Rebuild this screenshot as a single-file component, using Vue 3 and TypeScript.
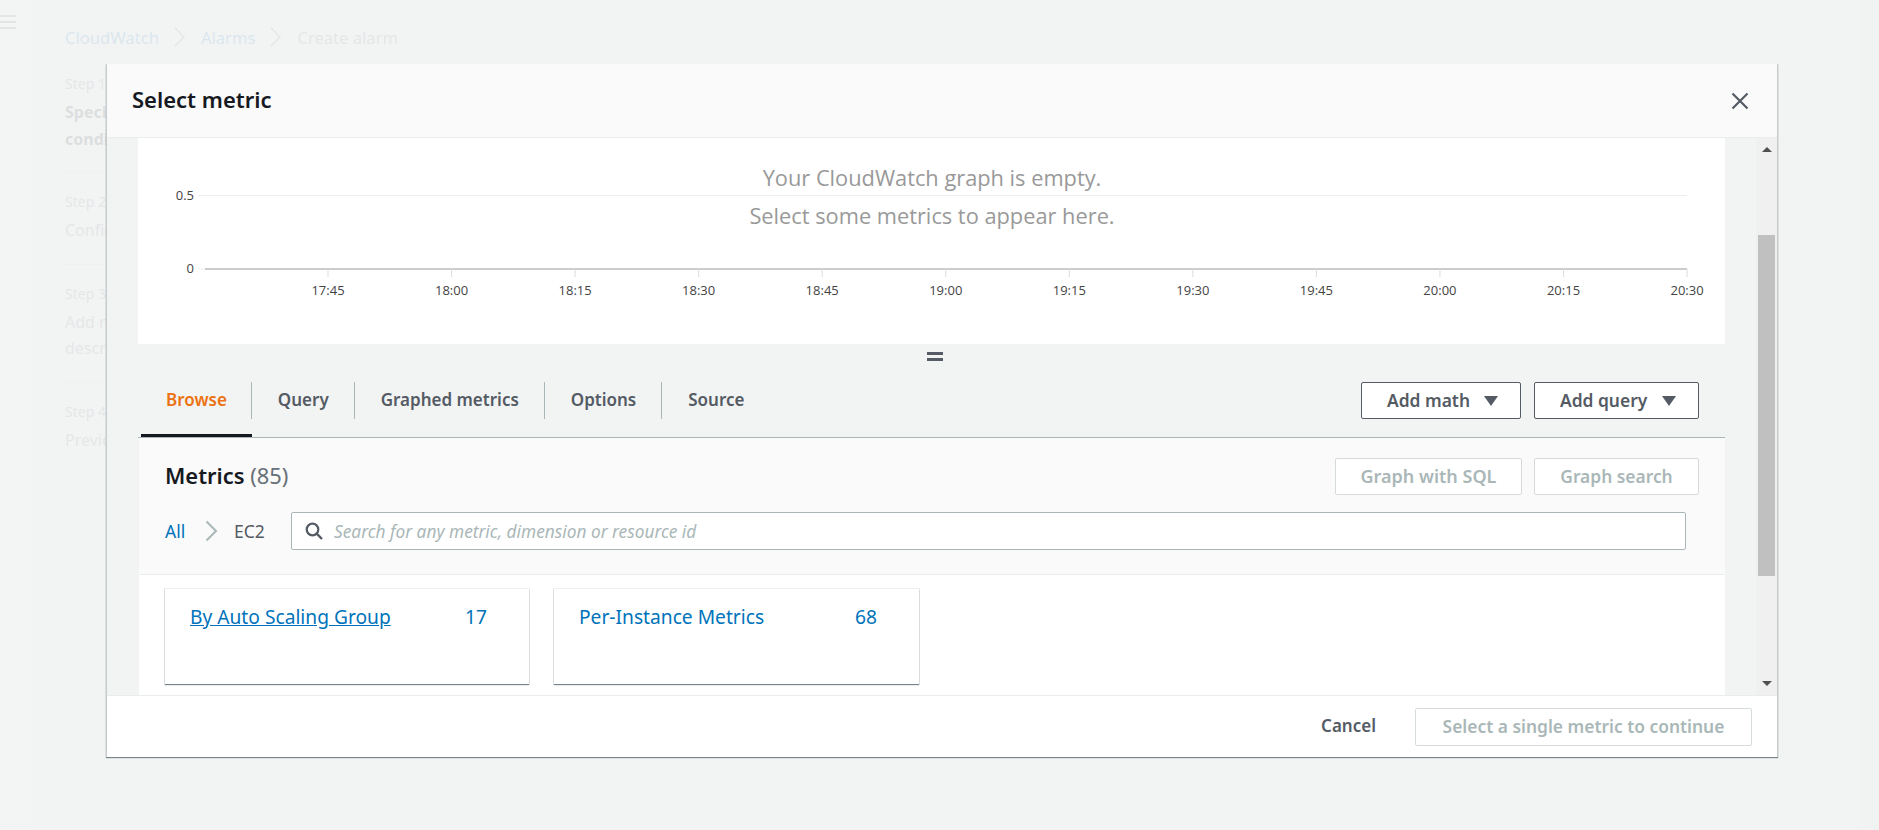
<script setup lang="ts">
interface Step {
  label: string
  title: string
  active?: boolean
}

const steps: Step[] = [
  { label: 'Step 1', title: 'Specify metric and conditions', active: true },
  { label: 'Step 2', title: 'Configure actions' },
  { label: 'Step 3', title: 'Add metric name and description' },
  { label: 'Step 4', title: 'Preview and create' },
]

const tabs = ['Browse', 'Query', 'Graphed metrics', 'Options', 'Source']

const times = ['17:45', '18:00', '18:15', '18:30', '18:45', '19:00', '19:15', '19:30', '19:45', '20:00', '20:15', '20:30']
const ticks = times.map((label, i) => ({ label, x: 190 + i * 123.55 }))

const groups = [
  { name: 'By Auto Scaling Group', count: 17, underlined: true },
  { name: 'Per-Instance Metrics', count: 68, underlined: false },
]
</script>

<template>
  <div class="page">
    <div class="rail">
      <svg width="16" height="14" viewBox="0 0 16 14" class="burger">
        <path d="M0 1h16M0 7h16M0 13h16" stroke="#545b64" stroke-width="2" />
      </svg>
    </div>
    <div class="main">
      <div class="crumbs">
        <span class="crumb-link">CloudWatch</span>
        <svg width="12" height="20" viewBox="0 0 12 20" fill="none"><path d="M1 1l9 9-9 9" stroke="#687078" stroke-width="1.5" /></svg>
        <span class="crumb-link">Alarms</span>
        <svg width="12" height="20" viewBox="0 0 12 20" fill="none"><path d="M1 1l9 9-9 9" stroke="#687078" stroke-width="1.5" /></svg>
        <span class="crumb-now">Create alarm</span>
      </div>
      <ul class="steps">
        <li v-for="step in steps" :key="step.label" class="step">
          <div class="step-label">{{ step.label }}</div>
          <div class="step-title" :class="{ active: step.active }">{{ step.title }}</div>
        </li>
      </ul>
    </div>
    <div class="strip"></div>

    <div class="backdrop"></div>

    <div class="modal">
      <header class="modal-head">
        <h2>Select metric</h2>
        <svg width="18" height="18" viewBox="0 0 18 18" fill="none">
          <path d="M1.5 1.5l15 15M16.5 1.5l-15 15" stroke="#545b64" stroke-width="2.2" />
        </svg>
      </header>

      <div class="modal-body">
        <div class="content">
          <svg class="chart" width="1587" height="206" viewBox="0 0 1587 206">
            <line x1="60" y1="57.5" x2="1549" y2="57.5" stroke="#eeeeee" />
            <line x1="60" y1="131" x2="67" y2="131" stroke="#eeeeee" />
            <line x1="67" y1="131" x2="1549" y2="131" stroke="#cccccc" stroke-width="2" />
            <text x="56" y="62" text-anchor="end" class="axis">0.5</text>
            <text x="56" y="135" text-anchor="end" class="axis">0</text>
            <g v-for="t in ticks" :key="t.label">
              <line :x1="t.x" y1="131" :x2="t.x" y2="139" stroke="#dddddd" />
              <text :x="t.x" y="157" text-anchor="middle" class="axis">{{ t.label }}</text>
            </g>
            <text x="794" y="48" text-anchor="middle" class="empty">Your CloudWatch graph is empty.</text>
            <text x="794" y="86" text-anchor="middle" class="empty">Select some metrics to appear here.</text>
          </svg>

          <div class="splitter"><span></span></div>

          <div class="tabbar">
            <div class="tabs">
              <div v-for="(tab, i) in tabs" :key="tab" class="tab" :class="{ on: i === 0 }">
                <span class="tab-text" :class="{ last: i === tabs.length - 1 }">{{ tab }}</span>
              </div>
            </div>
            <div class="tab-actions">
              <button class="btn drop add-math">Add math <i class="caret"></i></button>
              <button class="btn drop add-query">Add query <i class="caret"></i></button>
            </div>
          </div>

          <section class="panel">
            <div class="panel-top">
              <h3>Metrics <span>(85)</span></h3>
              <div class="panel-actions">
                <button class="btn off sql">Graph with SQL</button>
                <button class="btn off graph">Graph search</button>
              </div>
            </div>
            <div class="panel-search">
              <a class="all">All</a>
              <svg width="13" height="22" viewBox="0 0 13 22" fill="none"><path d="M1.5 1.5l9.5 9.5-9.5 9.5" stroke="#aab7b8" stroke-width="2" /></svg>
              <span class="ns">EC2</span>
              <div class="search">
                <svg width="18" height="18" viewBox="0 0 18 18" fill="none">
                  <circle cx="7.5" cy="7.5" r="5.8" stroke="#545b64" stroke-width="2.2" />
                  <path d="M11.7 11.7L17 17" stroke="#545b64" stroke-width="2.4" />
                </svg>
                <span>Search for any metric, dimension or resource id</span>
              </div>
            </div>
          </section>

          <div class="groups">
            <div v-for="g in groups" :key="g.name" class="card">
              <a :class="{ under: g.underlined }">{{ g.name }}</a>
              <span>{{ g.count }}</span>
            </div>
          </div>
        </div>

        <div class="scrollbar">
          <i class="arrow up"></i>
          <div class="thumb"></div>
          <i class="arrow down"></i>
        </div>
      </div>

      <footer class="modal-foot">
        <button class="cancel">Cancel</button>
        <button class="btn off submit">Select a single metric to continue</button>
      </footer>
    </div>
  </div>
</template>

<style>
html,
body {
  margin: 0;
  overflow: hidden;
}
</style>

<style scoped>
.page {
  position: relative;
  display: flex;
  height: 830px;
  overflow: hidden;
  background: #f2f3f3;
  font-family: "Noto Sans", "Open Sans", sans-serif;
  font-size: 16px;
  color: #16191f;
}

.rail {
  width: 32px;
  flex-shrink: 0;
  background: #f8f8f8;
  padding-top: 15px;
  box-sizing: border-box;
}

.burger {
  display: block;
}

.main {
  flex: 1;
  padding: 25px 0 0 33px;
}

.strip {
  width: 17px;
  flex-shrink: 0;
  background: #e4e6e6;
}

.crumbs {
  display: flex;
  align-items: center;
  gap: 15px;
  height: 24px;
  font-size: 16.6px;
}

.crumb-link {
  color: #0073bb;
}

.crumb-now {
  color: #687078;
}

.steps {
  list-style: none;
  margin: 24px 0 0;
  padding: 0;
  width: 185px;
}

.step {
  padding: 0 0 20px;
  margin-bottom: 18px;
  border-bottom: 1px solid #d5dbdb;
}

.step:last-child {
  border-bottom: none;
}

.step-label {
  font-size: 14px;
  line-height: 22px;
  color: #687078;
}

.step-title {
  margin-top: 4px;
  line-height: 26.5px;
  color: #687078;
}

.step-title.active {
  font-weight: 700;
  color: #16191f;
}

.backdrop {
  position: absolute;
  inset: 0;
  background: rgba(242, 243, 243, 0.9);
}

.modal {
  position: absolute;
  left: 106px;
  top: 64px;
  width: 1672px;
  height: 693px;
  box-sizing: border-box;
  display: flex;
  flex-direction: column;
  background: #ffffff;
  border-left: 1px solid #c6cbcb;
  border-right: 1px solid #c6cbcb;
  box-shadow: 0 1px 1px 0 rgba(0, 28, 36, 0.5);
}

.modal-head {
  height: 74px;
  flex-shrink: 0;
  display: flex;
  align-items: center;
  justify-content: space-between;
  padding: 0 28px 0 25px;
  box-sizing: border-box;
  background: #fafafa;
  border-bottom: 1px solid #eaeded;
}

.modal-head h2 {
  margin: 0 0 3px;
  font-size: 22px;
  font-weight: 600;
}

.modal-body {
  flex: 1;
  min-height: 0;
  display: flex;
  background: #f2f3f3;
}

.content {
  width: 1587px;
  margin-left: 31px;
  margin-right: 31px;
}

.chart {
  display: block;
  background: #ffffff;
  font-family: "Open Sans", sans-serif;
}

.axis {
  font-size: 13px;
  fill: #444444;
}

.empty {
  font-size: 21.8px;
  fill: #999999;
}

.splitter {
  height: 38px;
  display: flex;
  justify-content: center;
  padding-top: 8px;
  box-sizing: border-box;
}

.splitter span {
  width: 16px;
  height: 3px;
  margin-left: 7px;
  border-top: 3px solid #545b64;
  border-bottom: 3px solid #545b64;
}

.tabbar {
  height: 56px;
  box-sizing: border-box;
  display: flex;
  justify-content: space-between;
  padding: 0 26px 0 3px;
  border-bottom: 1px solid #aab7b8;
}

.tabs {
  display: flex;
  height: 55px;
}

.tab {
  height: 55px;
  box-sizing: border-box;
  color: #545b64;
  font-size: 17px;
  font-weight: 600;
}

.tab.on {
  color: #ec7211;
  border-bottom: 3px solid #16191f;
}

.tab-text {
  display: block;
  height: 37px;
  line-height: 36px;
  padding: 0 25px 0 26px;
  border-right: 1px solid #aab7b8;
}

.tab.on .tab-text {
  padding: 0 24px 0 25px;
}

.tab-text.last {
  border-right: none;
}

.tab-actions {
  display: flex;
  gap: 13px;
  height: 37px;
}

.btn {
  height: 37px;
  box-sizing: border-box;
  font-family: inherit;
  font-size: 17.4px;
  font-weight: 600;
  border-radius: 2px;
  background: #ffffff;
  padding: 0 0 2px;
}

.btn.drop {
  display: flex;
  align-items: center;
  justify-content: space-between;
  padding: 0 22px 2px 25px;
  color: #545b64;
  border: 1px solid #545b64;
}

.add-math {
  width: 160px;
}

.add-query {
  width: 165px;
}

.caret {
  width: 0;
  height: 0;
  border-left: 7px solid transparent;
  border-right: 7px solid transparent;
  border-top: 10px solid #545b64;
  margin-top: 2px;
}

.btn.off {
  color: #aab7b8;
  border: 1px solid #d5dbdb;
}

.panel {
  height: 137px;
  margin-left: 1px;
  box-sizing: border-box;
  padding: 20px 26px 0 26px;
  background: #fafafa;
  border-bottom: 1px solid #eaeded;
}

.panel-top {
  display: flex;
  align-items: center;
  justify-content: space-between;
  height: 37px;
}

.panel-top h3 {
  margin: 0 0 2px;
  font-size: 21.9px;
  font-weight: 600;
}

.panel-top h3 span {
  font-weight: 400;
  color: #687078;
}

.panel-actions {
  display: flex;
  gap: 12px;
}

.btn.sql {
  width: 187px;
  font-size: 18px;
}

.graph {
  width: 165px;
}

.panel-search {
  display: flex;
  align-items: center;
  margin-top: 17px;
  height: 38px;
  font-size: 17.5px;
}

.all {
  color: #0073bb;
  width: 40px;
}

.ns {
  margin-left: 16px;
  width: 57px;
  color: #545b64;
}

.search {
  width: 1395px;
  height: 38px;
  box-sizing: border-box;
  display: flex;
  align-items: center;
  gap: 11px;
  padding-left: 13px;
  background: #ffffff;
  border: 1px solid #aab7b8;
  border-radius: 2px;
  font-size: 17.3px;
  font-style: italic;
  color: #aab7b8;
}

.groups {
  display: flex;
  gap: 25px;
  height: 120px;
  margin-left: 1px;
  box-sizing: border-box;
  padding: 14px 0 0 26px;
  background: #ffffff;
}

.card {
  width: 364px;
  height: 95px;
  box-sizing: border-box;
  display: flex;
  justify-content: space-between;
  padding: 16px 42px 0 25px;
  line-height: 24px;
  font-size: 19.2px;
  color: #0073bb;
  background: #ffffff;
  box-shadow: 0 1px 1px 0 rgba(0, 28, 36, 0.5), 0 0 0 1px rgba(0, 28, 36, 0.07);
}

.card + .card {
  width: 365px;
}

.under {
  text-decoration: underline;
}

.scrollbar {
  width: 21px;
  flex-shrink: 0;
  position: relative;
  background: #f0f0f0;
  display: flex;
  flex-direction: column;
  align-items: center;
}

.thumb {
  position: absolute;
  left: 2px;
  right: 2px;
  top: 97px;
  height: 341px;
  background: #c0c0c0;
}

.arrow {
  position: absolute;
  width: 0;
  height: 0;
  border-left: 5px solid transparent;
  border-right: 5px solid transparent;
}

.arrow.up {
  top: 9px;
  border-bottom: 5px solid #505050;
}

.arrow.down {
  bottom: 9px;
  border-top: 5px solid #505050;
}

.modal-foot {
  height: 62px;
  flex-shrink: 0;
  box-sizing: border-box;
  display: flex;
  align-items: center;
  justify-content: flex-end;
  gap: 39px;
  padding: 0 25px 0 0;
  background: #ffffff;
  border-top: 1px solid #eaeded;
}

.cancel {
  border: none;
  background: none;
  padding: 0 0 2px;
  font-family: inherit;
  font-size: 17px;
  font-weight: 600;
  color: #545b64;
}

.submit {
  width: 337px;
  height: 38px;
}
</style>
